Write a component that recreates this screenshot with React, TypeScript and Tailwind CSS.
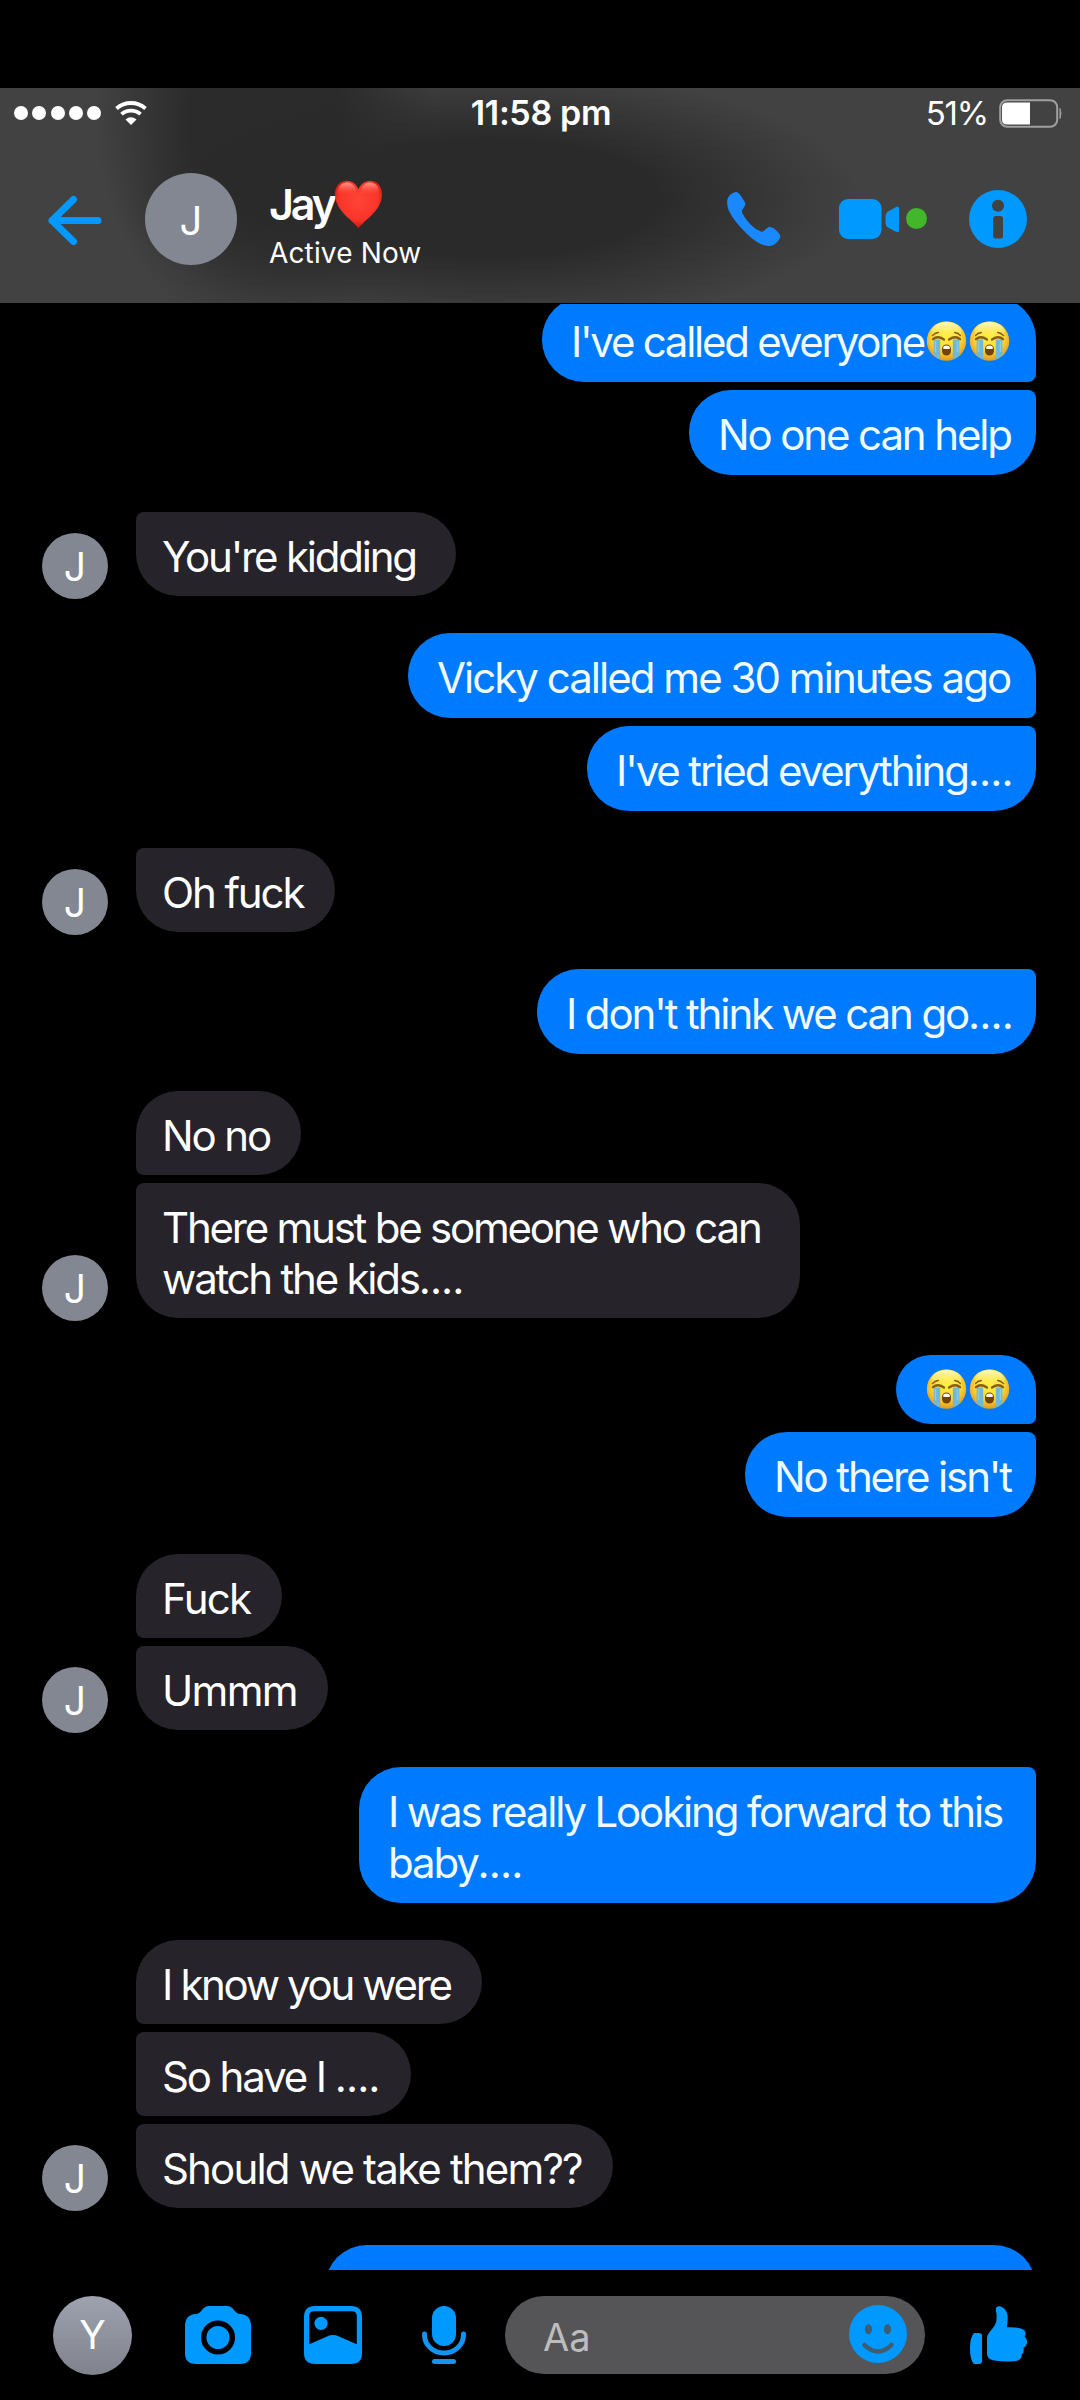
import { ReactNode, useId } from 'react'

interface Message {
  text?: string
  cries?: number
  width: string
  tracking?: string
}

interface Group {
  from: 'me' | 'jay'
  messages: Message[]
}

const groups: Group[] = [
  {
    from: 'me',
    messages: [
      { text: "I've called everyone", cries: 2, width: 'w-[494px]', tracking: 'tracking-[-2.250px]' },
      { text: 'No one can help', width: 'w-[347px]' },
    ],
  },
  { from: 'jay', messages: [{ text: "You're kidding", width: 'w-[320px]', tracking: 'tracking-[-2.200px]' }] },
  {
    from: 'me',
    messages: [
      { text: 'Vicky called me 30 minutes ago', width: 'w-[628px]', tracking: 'tracking-[-1.970px]' },
      { text: "I've tried everything....", width: 'w-[449px]' },
    ],
  },
  { from: 'jay', messages: [{ text: 'Oh fuck', width: 'w-[199px]' }] },
  { from: 'me', messages: [{ text: "I don't think we can go....", width: 'w-[499px]' }] },
  {
    from: 'jay',
    messages: [
      { text: 'No no', width: 'w-[165px]' },
      { text: 'There must be someone who can\nwatch the kids....', width: 'w-[664px]', tracking: 'tracking-[-2.230px]' },
    ],
  },
  {
    from: 'me',
    messages: [
      { cries: 2, width: 'w-[140px]' },
      { text: "No there isn't", width: 'w-[291px]' },
    ],
  },
  {
    from: 'jay',
    messages: [
      { text: 'Fuck', width: 'w-[146px]', tracking: 'tracking-[-1.700px]' },
      { text: 'Ummm', width: 'w-[192px]', tracking: 'tracking-[-1.700px]' },
    ],
  },
  {
    from: 'me',
    messages: [
      { text: 'I was really Looking forward to this\nbaby....', width: 'w-[677px]', tracking: 'tracking-[-2.160px]' },
    ],
  },
  {
    from: 'jay',
    messages: [
      { text: 'I know you were', width: 'w-[346px]', tracking: 'tracking-[-2.350px]' },
      { text: 'So have I ....', width: 'w-[275px]' },
      { text: 'Should we take them??', width: 'w-[477px]', tracking: 'tracking-[-1.830px]' },
    ],
  },
  { from: 'me', messages: [{ text: ' ', width: 'w-[711px]' }] },
]

function CryingFace({ className = '' }: { className?: string }) {
  const id = useId()
  return (
    <svg viewBox="0 0 43 40" className={`w-[43px] h-10 shrink-0 ${className}`}>
      <defs>
        <radialGradient id={id} cx="0.5" cy="0.4" r="0.64">
          <stop offset="0" stopColor="#ffee3d" />
          <stop offset="0.55" stopColor="#fedb35" />
          <stop offset="1" stopColor="#e08f18" />
        </radialGradient>
        <linearGradient id={`${id}-shine`} x1="0" y1="0" x2="0" y2="1">
          <stop offset="0" stopColor="#fffbd0" stopOpacity="0.95" />
          <stop offset="1" stopColor="#fff04a" stopOpacity="0" />
        </linearGradient>
      </defs>
      <circle cx="21.5" cy="20" r="19.7" fill={`url(#${id})`} />
      <ellipse cx="21.5" cy="10" rx="15" ry="9" fill={`url(#${id}-shine)`} />
      <path d="M8.600 18.500h6.600v19.800q-3.500-1-6.600-3.800zM27.800 18.500h6.600v16q-3.100 2.800-6.600 3.800z" fill="#6fb8d8" />
      <path d="M10.500 20v11M32.500 20v11" stroke="#8ccbe8" strokeWidth="1.500" />
      <path d="M8 18.200q4.500-4 11 .3M24 18.500q6.500-4.300 11-.3" fill="none" stroke="#8a5c18" strokeWidth="2.300" strokeLinecap="round" />
      <path d="M7.500 14.600q2-2.700 5.800-3.100M35.500 14.600q-2-2.700-5.800-3.100" fill="none" stroke="#8a5a12" strokeWidth="1.400" strokeLinecap="round" />
      <rect x="17" y="23.500" width="9" height="11" rx="4.500" fill="#764307" />
      <path d="M18 27.400q0-3 3.500-3t3.500 3q-3.500 1-7 0z" fill="#fff" />
    </svg>
  )
}

function Heart() {
  return (
    <svg viewBox="0 0 49 49" className="w-[49px] h-[49px]">
      <defs>
        <radialGradient id="heart" cx="0.5" cy="0.4" r="0.6">
          <stop offset="0" stopColor="#ff4436" />
          <stop offset="0.7" stopColor="#fb3429" />
          <stop offset="1" stopColor="#c91208" />
        </radialGradient>
        <linearGradient id="heart-shine" x1="0" y1="0" x2="0" y2="1">
          <stop offset="0" stopColor="#ffb3a6" stopOpacity="0.85" />
          <stop offset="1" stopColor="#ff4436" stopOpacity="0" />
        </linearGradient>
      </defs>
      <path d="M24.500 48.500C20 41 1 31 1 14.500 1 6 6 .8 13 .8c5.500 0 9.500 3.500 11.500 8.700C26.500 4.300 30.500.8 36 .8 43 .8 48 6 48 14.500 48 31 29 41 24.500 48.500z" fill="url(#heart)" />
      <path d="M3.500 13C4 6 8 2.500 13 2.500S21.500 6 22.500 13q-9 4-19 0zM45.500 13C45 6 41 2.500 36 2.500S27.500 6 26.500 13q9 4 19 0z" fill="url(#heart-shine)" />
    </svg>
  )
}

// the dots at the end of a line are set wider than its words
function MessageText({ text, tracking = 'tracking-[-2.120px]' }: { text: string; tracking?: string }) {
  return (
    <div className={`text-[42px] leading-[51px] whitespace-pre ${tracking}`}>
      {text.split('\n').map((line) => {
        const words = line.replace(/\.+$/, '')
        const dots = line.slice(words.length)
        return (
          <div key={line} className="flex">
            <span>{words}</span>
            {dots && <span className="tracking-[-0.900px]">{dots}</span>}
          </div>
        )
      })}
    </div>
  )
}

function Bubble({ message, mine, first, last }: { message: Message; mine: boolean; first: boolean; last: boolean }) {
  const emojiOnly = !message.text
  const corners = mine
    ? `rounded-l-[42px] ${first && !last ? 'rounded-tr-[42px] rounded-br-lg' : ''} ${last ? 'rounded-tr-lg rounded-br-[42px]' : ''}`
    : `rounded-r-[42px] ${first && !last ? 'rounded-tl-[42px] rounded-bl-lg' : ''} ${last ? 'rounded-tl-lg rounded-bl-[42px]' : ''} ${!first && !last ? 'rounded-l-lg' : ''}`
  return (
    <div
      className={`flex ${message.width} ${corners} ${
        mine ? 'bg-[#007aff] text-[#f0fbff] pl-[29px]' : 'bg-[#26232a] text-white pl-[26px]'
      } ${emojiOnly ? 'h-[69px] pt-[14px]' : mine ? 'pt-[19px] pb-[15px]' : 'pt-[19px] pb-[14px]'}`}
    >
      {message.text && <MessageText text={message.text} tracking={message.tracking} />}
      {message.cries && (
        <span className="flex ml-auto mr-[25px] pt-[5px]">
          {Array.from({ length: message.cries }, (_, i) => (
            <CryingFace key={i} className={emojiOnly ? '-mt-[5px]' : ''} />
          ))}
        </span>
      )}
    </div>
  )
}

function MessageGroup({ group, cut }: { group: Group; cut: boolean }) {
  const mine = group.from === 'me'
  const count = group.messages.length
  return (
    <div className={`flex items-end ${mine ? 'justify-end pr-11' : 'pl-[42px]'}`}>
      {!mine && (
        <div className="size-[66px] -mb-[3px] mr-7 rounded-full bg-[#838791] text-white text-[39px] flex items-center justify-center shrink-0 pt-[3px]">
          J
        </div>
      )}
      <div className={`flex flex-col gap-2 ${mine ? 'items-end' : 'items-start'}`}>
        {group.messages.map((message, i) => (
          <Bubble key={i} message={message} mine={mine} first={i === 0} last={i === count - 1 && !cut} />
        ))}
      </div>
    </div>
  )
}

function Icon({ box, className, children }: { box: string; className: string; children: ReactNode }) {
  return (
    <svg viewBox={box} className={`shrink-0 ${className}`} fill="#0099ff">
      {children}
    </svg>
  )
}

function StatusBar() {
  return (
    <div className="grid grid-cols-3 items-center h-[50px] text-white">
      <div className="flex items-center pl-3.5">
        <div className="flex gap-[4.300px]">
          {[0, 1, 2, 3, 4].map((dot) => (
            <span key={dot} className="size-3.5 rounded-full bg-white" />
          ))}
        </div>
        <svg viewBox="0 0 32 24" className="w-8 h-6 ml-[14px]" fill="none" stroke="#fff" strokeWidth="3.800">
          <path d="M1.500 7.500Q8 2 16 2t14.500 5.500" />
          <path d="M6.500 13.200Q10.500 9.600 16 9.600t9.500 3.600" />
          <path d="M10.500 18.500q5.500-4.500 11 0L16 24z" fill="#fff" stroke="none" />
        </svg>
      </div>
      <div className="text-center text-[34px] font-semibold leading-none tracking-[-0.350px] pl-0.5">11:58 pm</div>
      <div className="flex items-center justify-end pr-[17px]">
        <span className="text-[33px] leading-none tracking-[-1.200px]">51%</span>
        <svg viewBox="0 0 64 29" className="w-16 h-[29px] ml-[11px]">
          <rect x="1.200" y="1.200" width="57" height="26.600" rx="7" fill="none" stroke="#a0a0a0" strokeWidth="2" />
          <path d="M8 3.500h23v22H8q-5 0-5-5v-12q0-5 5-5z" fill="#fff" />
          <path d="M61 9.500q2 5 0 10z" fill="#a0a0a0" stroke="#a0a0a0" />
        </svg>
      </div>
    </div>
  )
}

function Header() {
  return (
    <header className="h-[215px] shrink-0 bg-[#424242] bg-[radial-gradient(ellipse_370px_130px_at_490px_110px,#2a2a2a_45%,transparent_100%),radial-gradient(ellipse_170px_220px_at_265px_30px,#2b2b2b_45%,transparent_100%)]">
      <StatusBar />
      <div className="flex items-center h-[162px] pl-12 pr-[53px]">
        <svg viewBox="0 0 54 49" className="w-[54px] h-[49px] mt-0.5" fill="none" stroke="#0099ff" strokeWidth="7" strokeLinecap="round" strokeLinejoin="round">
          <path d="M25.500 3.500L4 24.500l21.500 21M4 24.500h46" />
        </svg>
        <div className="size-[92px] ml-[43px] rounded-full bg-[#838791] text-white text-[40px] flex items-center justify-center pt-1">J</div>
        <div className="flex flex-col ml-8 pt-[11px] text-white">
          <div className="flex items-center h-[50px]">
            <span className="text-[43px] font-semibold leading-none tracking-[-3.100px]">Jay</span>
            <Heart />
          </div>
          <span className="text-[28px] leading-[34px] tracking-[0.150px] mt-1.5">Active Now</span>
        </div>
        <Icon box="0 0 54 54" className="w-[54px] h-[54px] ml-auto">
          <path d="M9 0q2.500 0 5 4l4 6.500q1 2-.5 4l-2 3q-1 1.500 0 4 3 6 8 11t10.500 7q1.500.500 3-.700 2.500-2.800 5-3.800 2.500-.5 5 1.500 4.500 3.500 6 6.500 1 2.500-1.500 5.500Q47 54 41.500 54q-9 0-22-12.500T1.500 18Q-2 7 3.500 2.500 6.500 0 9 0z" fill="#1a88ff" />
        </Icon>
        <Icon box="0 0 61 40" className="w-[61px] h-10 ml-[58px]">
          <rect width="42.500" height="40" rx="9" />
          <path d="M46.500 17q0-3 2.500-4.500l8-4.600q3-1.200 3 1.500v21.800q0 2.700-3 1.500l-8-4.200q-2.500-1.500-2.500-4.500z" />
        </Icon>
        <span className="size-[21px] ml-1.5 -mt-0.5 rounded-full bg-[#42b72a]" />
        <Icon box="0 0 58 58" className="size-[58px] ml-[42px]">
          <circle cx="29" cy="29" r="29" />
          <circle cx="29" cy="15.700" r="6" fill="#424242" />
          <rect x="24" y="26" width="10" height="22.500" rx="2.500" fill="#424242" />
        </Icon>
      </div>
    </header>
  )
}

function Composer() {
  return (
    <footer className="h-[130px] shrink-0 flex items-center pl-[53px] pr-[53px] bg-black">
      <div className="size-[79px] rounded-full bg-linear-to-b from-[#9ea2af] to-[#80838c] text-white text-[39px] flex items-center justify-center">Y</div>
      <Icon box="0 0 66 58" className="w-[66px] h-[58px] ml-[53px]">
        <path d="M24 0h18q4 0 7 4t6 4q11 .5 11 12v27q0 11-11 11H11Q0 58 0 47V20Q0 8.500 11 8q3 0 6-4t7-4z" />
        <circle cx="33" cy="31.500" r="14.300" stroke="#000" strokeWidth="5.500" />
      </Icon>
      <Icon box="0 0 58 58" className="size-[58px] ml-[53px]">
        <path fillRule="evenodd" d="M11 0h36q11 0 11 11v36q0 11-11 11H11Q0 58 0 47V11Q0 0 11 0zM10 5.200q-4.800 0-4.800 4.800v28.300L23 30.500q6-2.800 12 0l17.800 7.800V10q0-4.800-4.800-4.800z" />
        <circle cx="17" cy="17.300" r="6.600" />
      </Icon>
      <Icon box="0 0 44 58" className="w-11 h-[58px] ml-[60px]">
        <rect x="10" width="24" height="40" rx="12" />
        <path d="M2.500 28v1a19.500 18 0 0 0 39 0v-1" fill="none" stroke="#1494ee" strokeWidth="5" strokeLinecap="round" />
        <rect x="10" y="53" width="24" height="5" rx="2.500" fill="#1494ee" />
      </Icon>
      <div className="flex items-center w-[420px] h-[78px] ml-[39px] pl-[38px] pr-[18px] rounded-full bg-[#555557]">
        <span className="text-[38px] leading-none text-[#bdbdbd] pt-1">Aa</span>
        <Icon box="0 0 58 58" className="size-[58px] ml-auto -mt-0.5">
          <circle cx="29" cy="29" r="29" />
          <ellipse cx="19.500" cy="24.300" rx="3.600" ry="5" fill="#3f5c70" />
          <ellipse cx="38.500" cy="24.300" rx="3.600" ry="5" fill="#3f5c70" />
          <path d="M15.500 40q13.500 13 27 0" fill="none" stroke="#3f5c70" strokeWidth="4.500" strokeLinecap="round" />
        </Icon>
      </div>
      <Icon box="0 0 57 58" className="w-[57px] h-[58px] ml-[45px]">
        <path d="M4 27h5q3 0 3 3v25q0 3-3 3H4q-4-4-4-15.500T4 27z" />
        <path d="M26 2Q27-.3 30 .3 36 2 37.500 9 38 15 36.800 21.300 50 20.800 54 24 57 27 54.500 30.500 57.500 33 57 37 56.500 40.500 53.500 42 54.500 46.500 51.500 48.800 52 54.500 44 55.300 34 56 24 54.500 17 53 17 48V32Q17 29 20 25.500 25 20 26.300 15.500 27 9 26 5z" />
      </Icon>
    </footer>
  )
}

export default function App() {
  return (
    <div className="flex flex-col w-[1080px] h-[2400px] pt-[88px] bg-black overflow-hidden font-[Inter,'Liberation_Sans',sans-serif]">
      <Header />
      <main className="flex-1 min-h-0 mt-px overflow-hidden">
        <div className="flex flex-col gap-[37px] -mt-[7px]">
          {groups.map((group, i) => (
            <MessageGroup key={i} group={group} cut={i === groups.length - 1} />
          ))}
        </div>
      </main>
      <Composer />
    </div>
  )
}
